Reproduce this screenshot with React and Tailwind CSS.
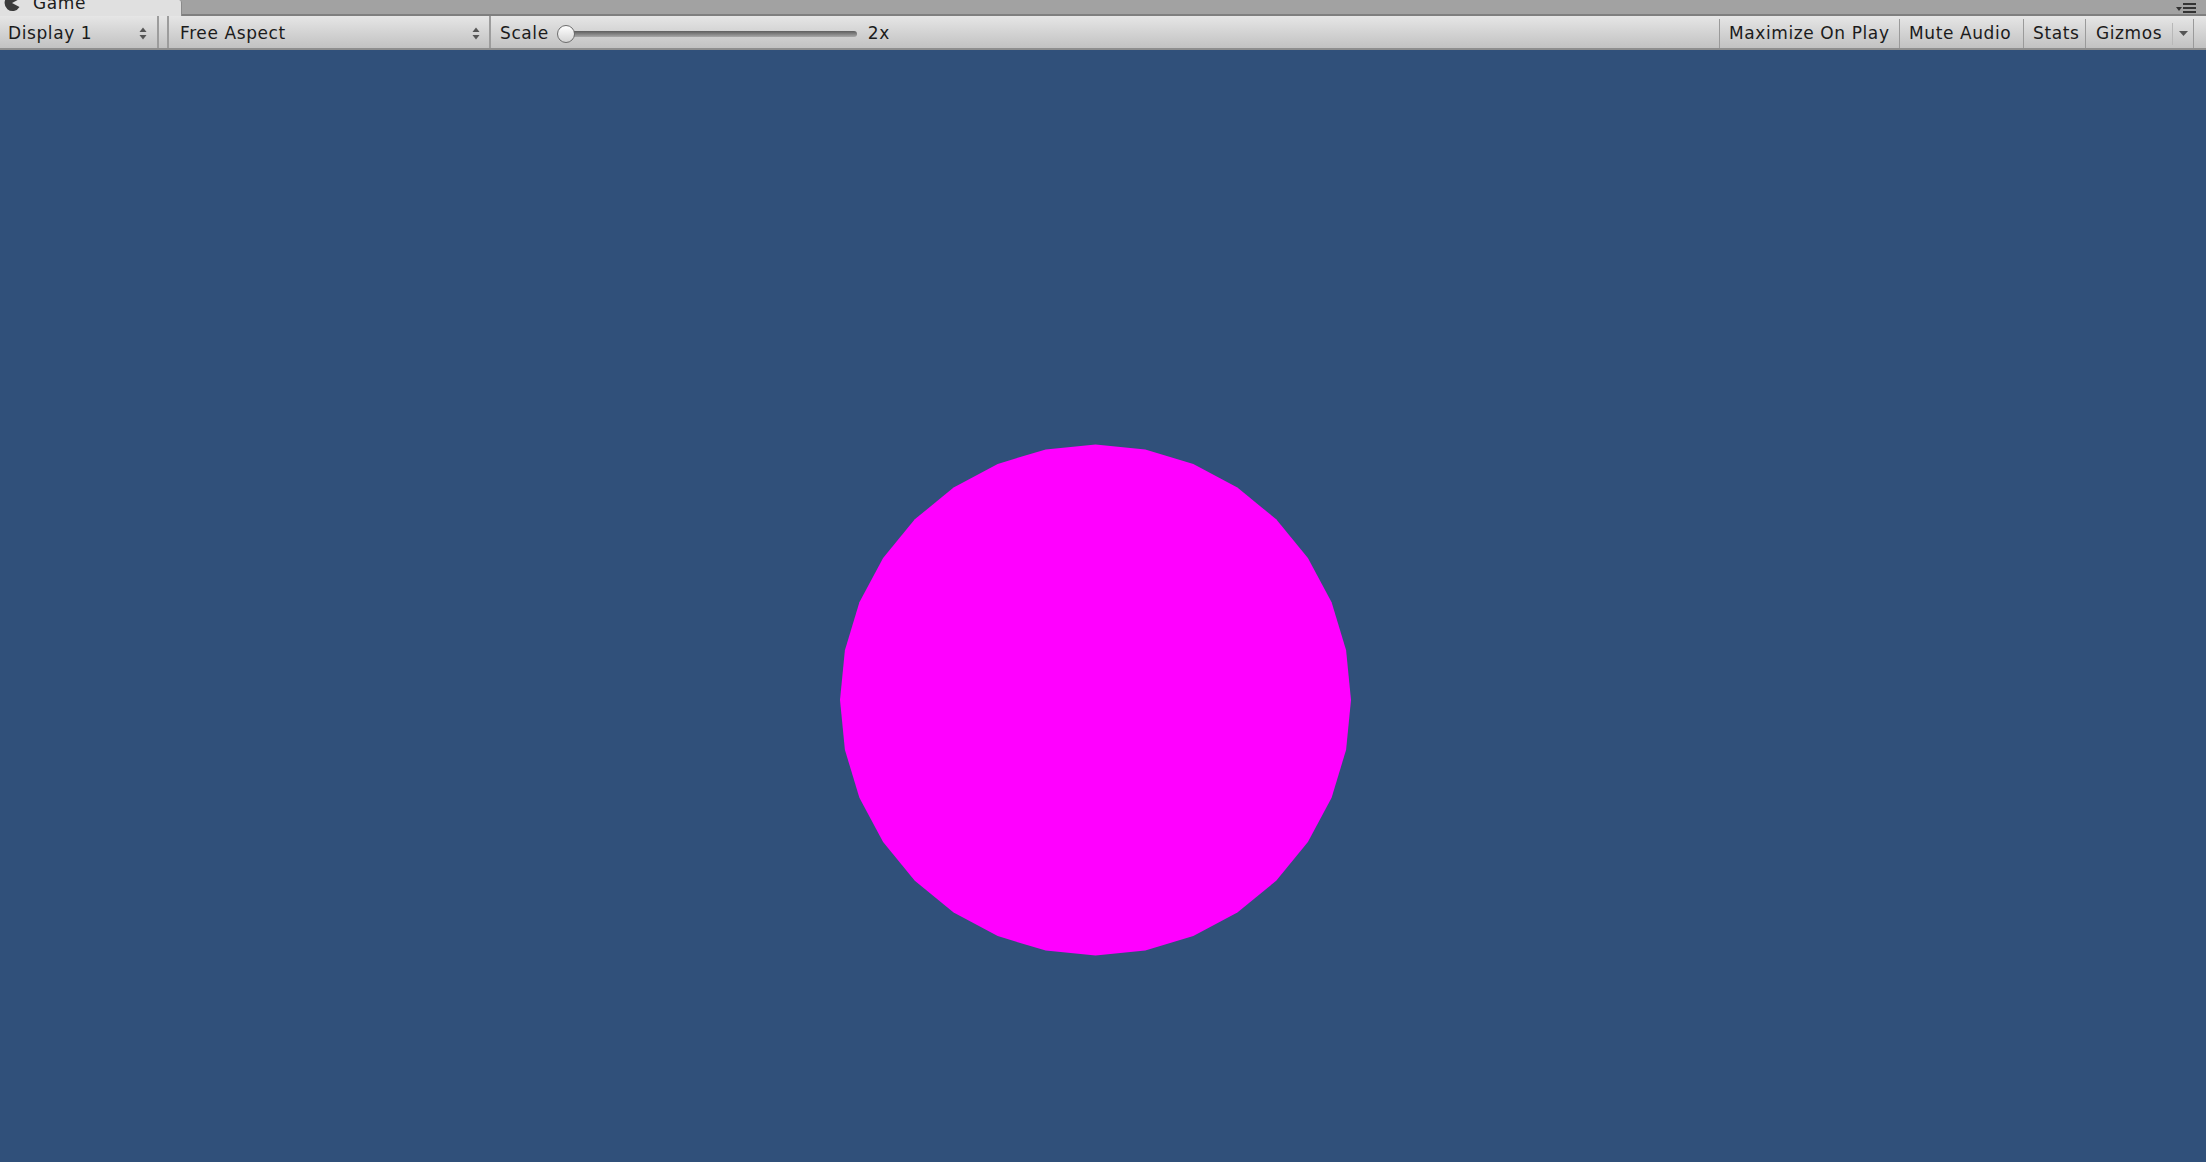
import React from 'react'

const FONT = { fontFamily: '"DejaVu Sans", "Liberation Sans", sans-serif' }

// 32-sided mesh "sphere" as Unity draws it, vertex at the top
const CX = 1095.5
const CY = 650
const R = 255.5
const POINTS = Array.from({ length: 32 }, (_, i) => {
  const a = -Math.PI / 2 + (i * Math.PI * 2) / 32
  return `${(CX + R * Math.cos(a)).toFixed(1)},${(CY + R * Math.sin(a)).toFixed(1)}`
}).join(' ')

function UpDownArrows() {
  return (
    <svg width="8" height="13" viewBox="0 0 8 13" className="shrink-0">
      <path d="M4 0.5 L7.5 5 L0.5 5 Z" fill="#555" />
      <path d="M4 12.5 L7.5 8 L0.5 8 Z" fill="#555" />
    </svg>
  )
}

function DownArrow({ color = '#444' }) {
  return (
    <svg width="9" height="5" viewBox="0 0 9 5">
      <path d="M0 0 L9 0 L4.5 5 Z" fill={color} />
    </svg>
  )
}

function GameIcon() {
  return (
    <svg width="18" height="18" viewBox="0 0 18 18" className="shrink-0">
      <path d="M9 9 L16.5 5 A8 8 0 1 0 16.5 13 Z" fill="#3a3a3a" />
    </svg>
  )
}

function ToolButton({ children, className = '' }) {
  return (
    <div className={`h-full flex items-center border-l border-[#9a9a9a] ${className}`}>
      {children}
    </div>
  )
}

export default function App() {
  return (
    <div className="w-full h-[1162px] flex flex-col overflow-hidden text-[#1b1b1b]" style={FONT}>
      {/* Tab strip */}
      <div className="h-[16px] shrink-0 flex bg-[#a2a2a2] border-b-2 border-[#7f7f7f]">
        <div className="w-[182px] h-[16px] -mb-[2px] bg-[#e0e0e0] rounded-tr-[3px] overflow-hidden border-r border-[#8a8a8a]">
          <div className="flex items-center gap-[12px] pl-[3px] -mt-[7px] text-[17px] leading-[20px] tracking-[0.6px]">
            <GameIcon />
            <span>Game</span>
          </div>
        </div>
        <div className="flex-1" />
        <div className="flex items-center gap-[1px] pr-[10px] pt-[2px]">
          <svg width="6" height="4" viewBox="0 0 6 4" className="mt-[1px]">
            <path d="M0 0 L6 0 L3 4 Z" fill="#333" />
          </svg>
          <svg width="13" height="10" viewBox="0 0 13 10">
            <rect x="0" y="0" width="13" height="2" fill="#333" />
            <rect x="0" y="4" width="13" height="2" fill="#333" />
            <rect x="0" y="8" width="13" height="2" fill="#333" />
          </svg>
        </div>
      </div>

      {/* Toolbar */}
      <div className="h-[34px] shrink-0 flex pt-[3px] bg-gradient-to-b from-[#e6e6e6] to-[#c2c2c2] border-b-2 border-[#8e8e8e] text-[17px] tracking-[0.6px]">
        <div className="w-[157px] h-full flex items-center justify-between pl-[8px] pr-[10px]">
          <span>Display 1</span>
          <UpDownArrows />
        </div>
        <div className="w-[12px] -mt-[3px] border-l-2 border-r-2 border-[#9c9c9c]" />
        <div className="w-[320px] h-full flex items-center justify-between pl-[11px] pr-[9px]">
          <span>Free Aspect</span>
          <UpDownArrows />
        </div>
        <div className="-mt-[3px] flex items-center border-l-2 border-[#9c9c9c] pl-[9px] pt-[3px]">
          <span>Scale</span>
          <div className="relative ml-[8px] w-[300px] h-[18px] flex items-center">
            <div className="ml-[8px] w-[292px] h-[6px] rounded-full bg-gradient-to-b from-[#5e5e5e] to-[#a8a8a8]" />
            <div className="absolute left-0 top-0 w-[18px] h-[18px] rounded-full border border-[#6d6d6d] bg-gradient-to-b from-[#ffffff] to-[#d4d4d4]" />
          </div>
          <span className="ml-[11px]">2x</span>
        </div>
        <div className="flex-1" />
        <ToolButton className="w-[180px] pl-[9px]">Maximize On Play</ToolButton>
        <ToolButton className="w-[124px] pl-[9px]">Mute Audio</ToolButton>
        <ToolButton className="w-[62px] pl-[9px]">Stats</ToolButton>
        <ToolButton className="w-[109px] pl-[10px] border-r">
          <span>Gizmos</span>
          <div className="ml-auto h-[22px] w-[21px] border-l border-[#b8b8b8] flex items-center justify-center">
            <DownArrow color="#555" />
          </div>
        </ToolButton>
        <div className="w-[12px]" />
      </div>

      {/* Game view */}
      <div className="flex-1 bg-[#30507a]">
        <svg width="100%" height="100%" viewBox="0 0 2206 1112" preserveAspectRatio="xMinYMin meet">
          <polygon points={POINTS} fill="#ff00ff" />
        </svg>
      </div>
    </div>
  )
}
